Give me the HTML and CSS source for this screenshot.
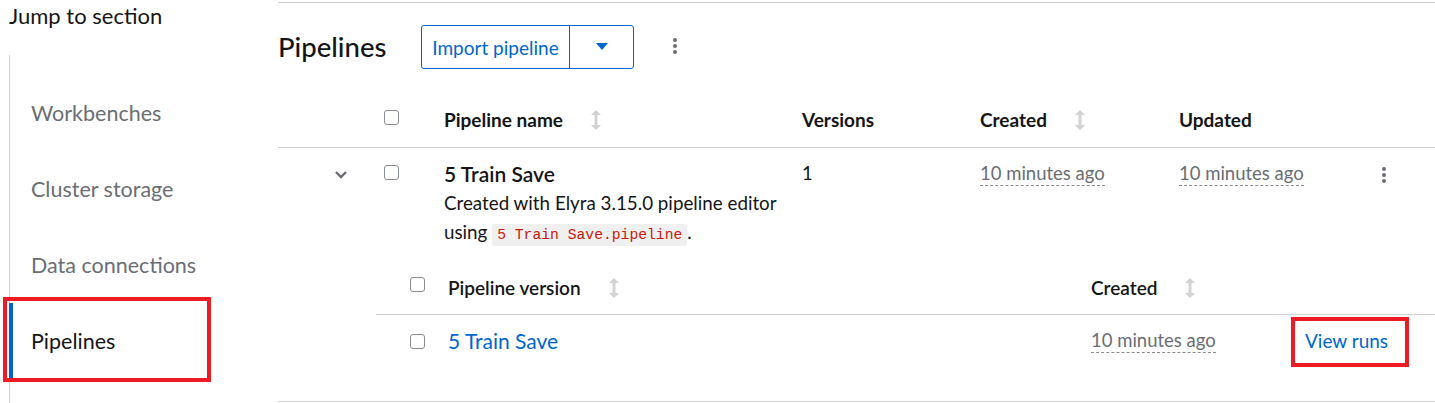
FILE: index.html
```html
<!DOCTYPE html>
<html lang="en">
<head>
<meta charset="utf-8">
<title>Pipelines</title>
<link rel="stylesheet" href="styles.css">
</head>
<body>
<div class="page">
  <aside class="sidebar">
    <div class="jump-title">Jump to section</div>
    <nav class="jump-nav">
      <div class="jump-item">Workbenches</div>
      <div class="jump-item">Cluster storage</div>
      <div class="jump-item">Data connections</div>
      <div class="jump-item active">Pipelines</div>
    </nav>
  </aside>
  <main class="main">
    <div class="toolbar">
      <h1 class="title">Pipelines</h1>
      <div class="split-btn">
        <span class="split-main">Import pipeline</span>
        <span class="split-toggle">
          <svg width="12" height="8" viewBox="0 0 12 8"><path d="M0 0 H12 L6 7 Z" fill="#0066cc"/></svg>
        </span>
      </div>
      <span class="kebab"><i></i><i></i><i></i></span>
    </div>

    <div class="row head">
      <div class="c-toggle"></div>
      <div class="c-check"><span class="cb"></span></div>
      <div class="c-name th">Pipeline name <span class="sort"><svg width="10" height="20" viewBox="0 0 10 20"><path d="M5 0 L10 5 H6.5 V15 H10 L5 20 L0 15 H3.5 V5 H0 Z" fill="#d2d2d2"/></svg></span></div>
      <div class="c-ver th">Versions</div>
      <div class="c-created th">Created <span class="sort"><svg width="10" height="20" viewBox="0 0 10 20"><path d="M5 0 L10 5 H6.5 V15 H10 L5 20 L0 15 H3.5 V5 H0 Z" fill="#d2d2d2"/></svg></span></div>
      <div class="c-updated th">Updated</div>
      <div class="c-kebab"></div>
    </div>

    <div class="expanded">
      <div class="row body">
        <div class="c-toggle"><svg class="chev" width="12" height="8" viewBox="0 0 12 8"><path d="M1 1 L6 6 L11 1" fill="none" stroke="#6a6e73" stroke-width="2.4"/></svg></div>
        <div class="c-check"><span class="cb"></span></div>
        <div class="c-name">
          <div class="pname">5 Train Save</div>
          <div class="pdesc">Created with Elyra 3.15.0 pipeline editor<br>using <code class="code">5 Train Save.pipeline</code>.</div>
        </div>
        <div class="c-ver td">1</div>
        <div class="c-created td"><span class="date">10 minutes ago</span></div>
        <div class="c-updated td"><span class="date">10 minutes ago</span></div>
        <div class="c-kebab"><span class="kebab"><i></i><i></i><i></i></span></div>
      </div>

      <div class="nested">
        <div class="nrow nhead">
          <div class="n-check"><span class="cb"></span></div>
          <div class="n-name th2">Pipeline version <span class="sort"><svg width="10" height="20" viewBox="0 0 10 20"><path d="M5 0 L10 5 H6.5 V15 H10 L5 20 L0 15 H3.5 V5 H0 Z" fill="#d2d2d2"/></svg></span></div>
          <div class="n-created th2">Created <span class="sort"><svg width="10" height="20" viewBox="0 0 10 20"><path d="M5 0 L10 5 H6.5 V15 H10 L5 20 L0 15 H3.5 V5 H0 Z" fill="#d2d2d2"/></svg></span></div>
          <div class="n-action"></div>
        </div>
        <div class="nrow nbody">
          <div class="n-check"><span class="cb"></span></div>
          <div class="n-name"><a class="vlink">5 Train Save</a></div>
          <div class="n-created"><span class="date">10 minutes ago</span></div>
          <div class="n-action"><a class="runs">View runs</a></div>
        </div>
      </div>
    </div>
  </main>
</div>
</body>
</html>
```

FILE: styles.css
```css
*, *::before, *::after { box-sizing: border-box; }
html, body { margin: 0; padding: 0; background: #fff; }
body {
  font-family: Lato, "Liberation Sans", sans-serif;
  color: #151515;
  width: 1435px;
  height: 403px;
  overflow: hidden;
}
.page { display: flex; height: 403px; }

.sidebar { width: 278px; flex: none; }
.jump-title {
  font-size: 22px;
  line-height: 24px;
  padding: 4px 0 0 9px;
  height: 55px;
}
.jump-nav {
  margin-left: 9px;
  border-left: 1px solid #d2d2d2;
  padding-top: 20px;
  height: 348px;
}
.jump-item {
  height: 76px;
  display: flex;
  align-items: center;
  padding-left: 21px;
  font-size: 21.5px;
  color: #6a6e73;
  position: relative;
}
.jump-item.active { color: #151515; }
.jump-item.active::before {
  content: "";
  position: absolute;
  left: -1px; top: 0; bottom: 1px;
  width: 4px;
  background: #0066cc;
}
.jump-item.active::after {
  content: "";
  position: absolute;
  left: -7px; top: -6px;
  width: 208px; height: 85px;
  border: 4px solid #ed1c24;
}

.main { flex: 1; margin-top: 2px; border-top: 1px solid #d2d2d2; }
.toolbar {
  height: 90px;
  display: flex;
  align-items: center;
}
.title {
  margin: 0;
  font-size: 27.5px;
  font-weight: 500;
  width: 143px;
  margin-top: -4px;
}
.split-btn {
  display: flex;
  height: 44px;
  margin-top: -2px;
  border: 1px solid #0066cc;
  border-radius: 3px;
  color: #0066cc;
}
.split-main {
  width: 148px;
  display: flex;
  align-items: center;
  justify-content: center;
  font-size: 19px;
  border-right: 1px solid #0066cc;
}
.split-toggle {
  width: 63px;
  display: flex;
  align-items: center;
  justify-content: center;
}
.toolbar > .kebab { margin-left: 39px; margin-top: -4px; }
.kebab {
  display: inline-flex;
  flex-direction: column;
  gap: 2px;
  width: 4px;
}
.kebab i { display: block; width: 4px; height: 4px; border-radius: 50%; background: #6a6e73; }

.row {
  display: grid;
  grid-template-columns: 106px 60px 358px 178px 199px 190px 1fr;
}
.row.head {
  height: 55px;
  border-bottom: 1px solid #d2d2d2;
  align-items: center;
  padding-bottom: 1px;
}
.th { font-size: 19px; font-weight: 700; display: flex; align-items: center; }
.th .sort { margin-left: 28px; display: inline-flex; }
.cb {
  display: inline-block;
  width: 15px; height: 15px;
  border: 1px solid #8a8d90;
  border-radius: 3px;
  background: #fff;
}
.head .c-check { margin-top: -3px; }

.expanded { border-bottom: 1px solid #d2d2d2; }
.row.body { padding-top: 11px; }
.c-toggle { padding-left: 57px; }
.body .c-toggle { padding-top: 4px; }
.body .c-check { padding-top: 5px; }
.pname { font-size: 21px; line-height: 29px; font-weight: 600; }
.pdesc { font-size: 18.8px; line-height: 29px; }
.code {
  font-family: "Liberation Mono", monospace;
  font-size: 14.7px;
  color: #c9190b;
  background: #f0f0f0;
  border-radius: 3px;
  padding: 3px 5px;
}
.td { font-size: 18.5px; line-height: 29px; }
.date {
  color: #6a6e73;
  border-bottom: 1px dashed #8a8d90;
  padding-bottom: 1px;
}
.body .c-kebab { display: flex; align-items: flex-start; padding-left: 13px; padding-top: 8px; }

.nested { margin-left: 98px; margin-top: 11px; }
.nrow {
  display: grid;
  grid-template-columns: 72px 643px 200px 1fr;
}
.nhead { height: 54px; border-bottom: 1px solid #d2d2d2; align-items: center; }
.nhead .n-check { margin-top: -4px; }
.n-check { padding-left: 34px; }
.th2 { font-size: 19px; font-weight: 600; display: flex; align-items: center; }
.th2 .sort { margin-left: 28px; display: inline-flex; }
.nbody { height: 86px; padding-top: 11px; font-size: 18.5px; line-height: 29px; }
.nbody .n-check { padding-top: 2px; }
.vlink { color: #0066cc; font-size: 21px; }
.runs {
  color: #0066cc;
  font-size: 19px;
  position: relative;
  margin-left: 14px;
}
.runs::after {
  content: "";
  position: absolute;
  left: -14px; top: -12px;
  width: 118px; height: 50px;
  border: 4px solid #ed1c24;
}
```
